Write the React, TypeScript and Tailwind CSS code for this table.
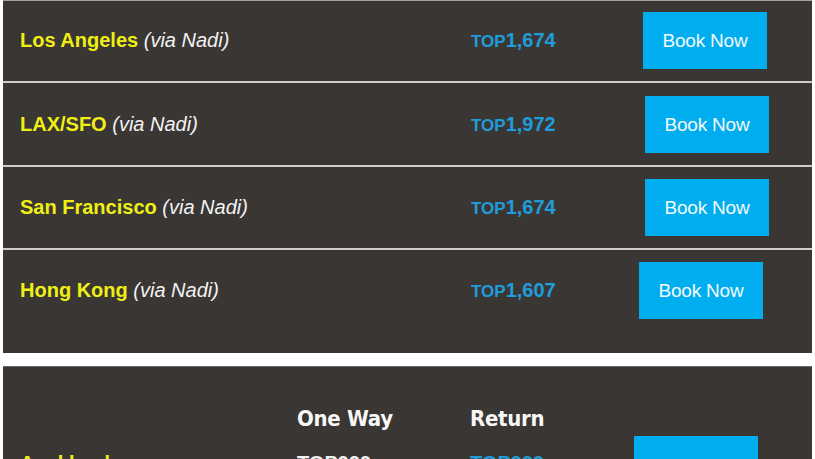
const fares = [
  { city: "Los Angeles", price: "1,674", pad: "pt-[11px] pb-[12px]", btn: "" },
  { city: "LAX/SFO", price: "1,972", pad: "pt-[13px] pb-[12px]", btn: "ml-[2px]" },
  { city: "San Francisco", price: "1,674", pad: "pt-[12px] pb-[12px]", btn: "ml-[2px]" },
  { city: "Hong Kong", price: "1,607", pad: "pt-[12px] pb-[34px]", btn: "-ml-[4px]" },
];

const BookButton = ({ className = "" }: { className?: string }) => (
  <button
    className={`w-[124px] h-[57px] bg-[#00aeef] text-[#f4f8fb] text-[19px] leading-none tracking-[-0.2px] ${className}`}
  >
    Book Now
  </button>
);

const App = () => {
  return (
    <div className="min-h-[459px] bg-white px-[3px] font-['Liberation_Sans',Arial,sans-serif] overflow-hidden">
      <div className="bg-[#3a3634] border-t border-[#a5a3a2]">
        {fares.map((f, i) => (
          <div
            key={f.city}
            className={`grid grid-cols-[451px_172px_124px] items-center pl-[17px] ${f.pad} ${
              i > 0 ? "border-t-2 border-[#cfcdcc]" : ""
            }`}
          >
            <div className="text-[20px] leading-none -mt-[2px]">
              <span className="font-bold text-[#efef14]">{f.city}</span>{" "}
              <span className="italic text-[#f2f2f2]">(via Nadi)</span>
            </div>
            <div className="text-[#1f9ddb] font-bold leading-none -mt-[2px]">
              <span className="text-[17px]">TOP</span>
              <span className="text-[20px]">{f.price}</span>
            </div>
            <BookButton className={f.btn} />
          </div>
        ))}
      </div>

      {/* one way / return table, cut off by the frame */}
      <div className="mt-[13px] bg-[#3a3634] border-t border-[#6b6866] pt-[35px] h-[120px]">
        <div className="grid grid-cols-[277px_173px_164px_121px] pl-[17px] h-[30px] items-center">
          <div />
          <div className="font-['Liberation_Sans_Narrow','DejaVu_Sans_Condensed',sans-serif] font-bold text-[22px] text-[#f7f7f7] tracking-[-0.3px]">
            One Way
          </div>
          <div className="font-['Liberation_Sans_Narrow','DejaVu_Sans_Condensed',sans-serif] font-bold text-[22px] text-[#f7f7f7] tracking-[-0.3px]">
            Return
          </div>
          <div />
        </div>
        <div className="grid grid-cols-[277px_173px_164px_121px] pl-[17px] mt-[4px] items-start">
          <div className="pt-[17px] font-bold text-[20px] text-[#efef14] leading-none">Auckland</div>
          <div className="pt-[17px] font-bold text-[20px] text-[#f2f2f2] leading-none">TOP999</div>
          <div className="pt-[17px] font-bold text-[20px] text-[#1f9ddb] leading-none">TOP999</div>
          <BookButton className="w-[121px] pt-[4px]" />
        </div>
      </div>
    </div>
  );
};

export default App;
